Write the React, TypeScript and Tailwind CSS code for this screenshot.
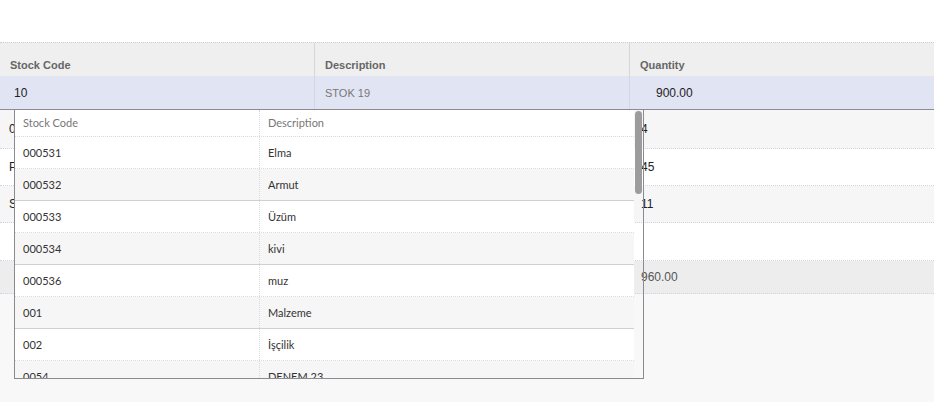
import React from 'react';

const lookupRows = [
    { code: "000531", desc: "Elma" },
    { code: "000532", desc: "Armut" },
    { code: "000533", desc: "Üzüm" },
    { code: "000534", desc: "kivi" },
    { code: "000536", desc: "muz" },
    { code: "001", desc: "Malzeme" },
    { code: "002", desc: "İşçilik" },
    { code: "0054", desc: "DENEM 23" },
];

const lines = [
    { code: "001", desc: "STOK 01", qty: "4", h: "h-[39px]" },
    { code: "P01", desc: "STOK 02", qty: "45", h: "h-[37px]" },
    { code: "S01", desc: "STOK 03", qty: "11", h: "h-[37px]" },
    { code: "", desc: "", qty: "", h: "h-[38px]" },
];

export default function App() {
    return (
        <div className="relative w-[934px] h-[402px] overflow-hidden bg-[#f8f8f8] font-['Liberation_Sans',Arial,sans-serif]">
            <div className="h-[42px] bg-white" />

            {/* header */}
            <div className="flex h-[34px] bg-[#efefef] border-t border-dotted border-[#cfcfcf] text-[11px] font-bold text-[#666]">
                <div className="w-[315px] border-r border-[#d6d6d6] pl-[10px] pt-[12px] flex items-center">Stock Code</div>
                <div className="w-[315px] border-r border-[#d6d6d6] pl-[10px] pt-[12px] flex items-center">Description</div>
                <div className="flex-1 pl-[10px] pt-[12px] flex items-center">Quantity</div>
            </div>

            {/* selected row */}
            <div className="flex h-[34px] bg-[#e1e4f3] border-b border-[#8d8d99]">
                <div className="w-[315px] border-r border-[#d3d6e6] pl-[14px] pt-[1px] flex items-center text-[12px] text-[#222]">10</div>
                <div className="w-[315px] border-r border-[#d3d6e6] pl-[10px] pt-[1px] flex items-center text-[11px] text-[#777]">STOK 19</div>
                <div className="flex-1 pl-[26px] pt-[1px] flex items-center text-[12px] text-[#222]">900.00</div>
            </div>

            {lines.map((l, i) => (
                <div
                    key={i}
                    className={`flex ${l.h} border-b border-dotted border-[#d2d3e0] text-[12px] text-[#222] ${i % 2 === 0 ? 'bg-[#f6f6f6]' : 'bg-white'}`}
                >
                    <div className="w-[315px] pl-[9px] flex items-center">{l.code}</div>
                    <div className="w-[315px] pl-[10px] flex items-center text-[11px] text-[#777]">{l.desc}</div>
                    <div className="flex-1 pl-[11px] flex items-center">{l.qty}</div>
                </div>
            ))}

            {/* totals */}
            <div className="flex h-[33px] bg-[#ededed] border-b border-dotted border-[#d2d3e0] text-[12px] text-[#555]">
                <div className="w-[630px]" />
                <div className="flex-1 pl-[11px] flex items-center">960.00</div>
            </div>

            {/* lookup dropdown */}
            <div className="absolute left-[14px] top-[109px] w-[630px] h-[270px] border border-[#8a8a90] flex font-['Lato','Noto_Sans',sans-serif] text-[11px] text-[#333]">
                <div className="w-[619px] overflow-hidden bg-white">
                    <div className="flex h-[27px] text-[#777] border-b border-dotted border-[#d8d8e0]">
                        <div className="w-[245px] border-r border-dotted border-[#d8d8e0] pl-[8px] flex items-center">Stock Code</div>
                        <div className="flex-1 pl-[8px] flex items-center">Description</div>
                    </div>
                    {lookupRows.map((r, i) => (
                        <div
                            key={r.code}
                            className={`flex h-[32px] ${i % 2 === 1 ? 'bg-[#f6f6f6] border-b border-[#d0d0d0]' : 'bg-white border-b border-dotted border-[#d8d8e0]'}`}
                        >
                            <div className="w-[245px] border-r border-dotted border-[#d8d8e0] pl-[8px] pt-[2px] flex items-center">{r.code}</div>
                            <div className="flex-1 pl-[8px] pt-[2px] flex items-center">{r.desc}</div>
                        </div>
                    ))}
                </div>
                <div className="flex-1 pl-[1px] pt-[1px]">
                    <div className="w-[7px] h-[83px] rounded-full bg-[#9c9c9c]" />
                </div>
            </div>
        </div>
    );
}
